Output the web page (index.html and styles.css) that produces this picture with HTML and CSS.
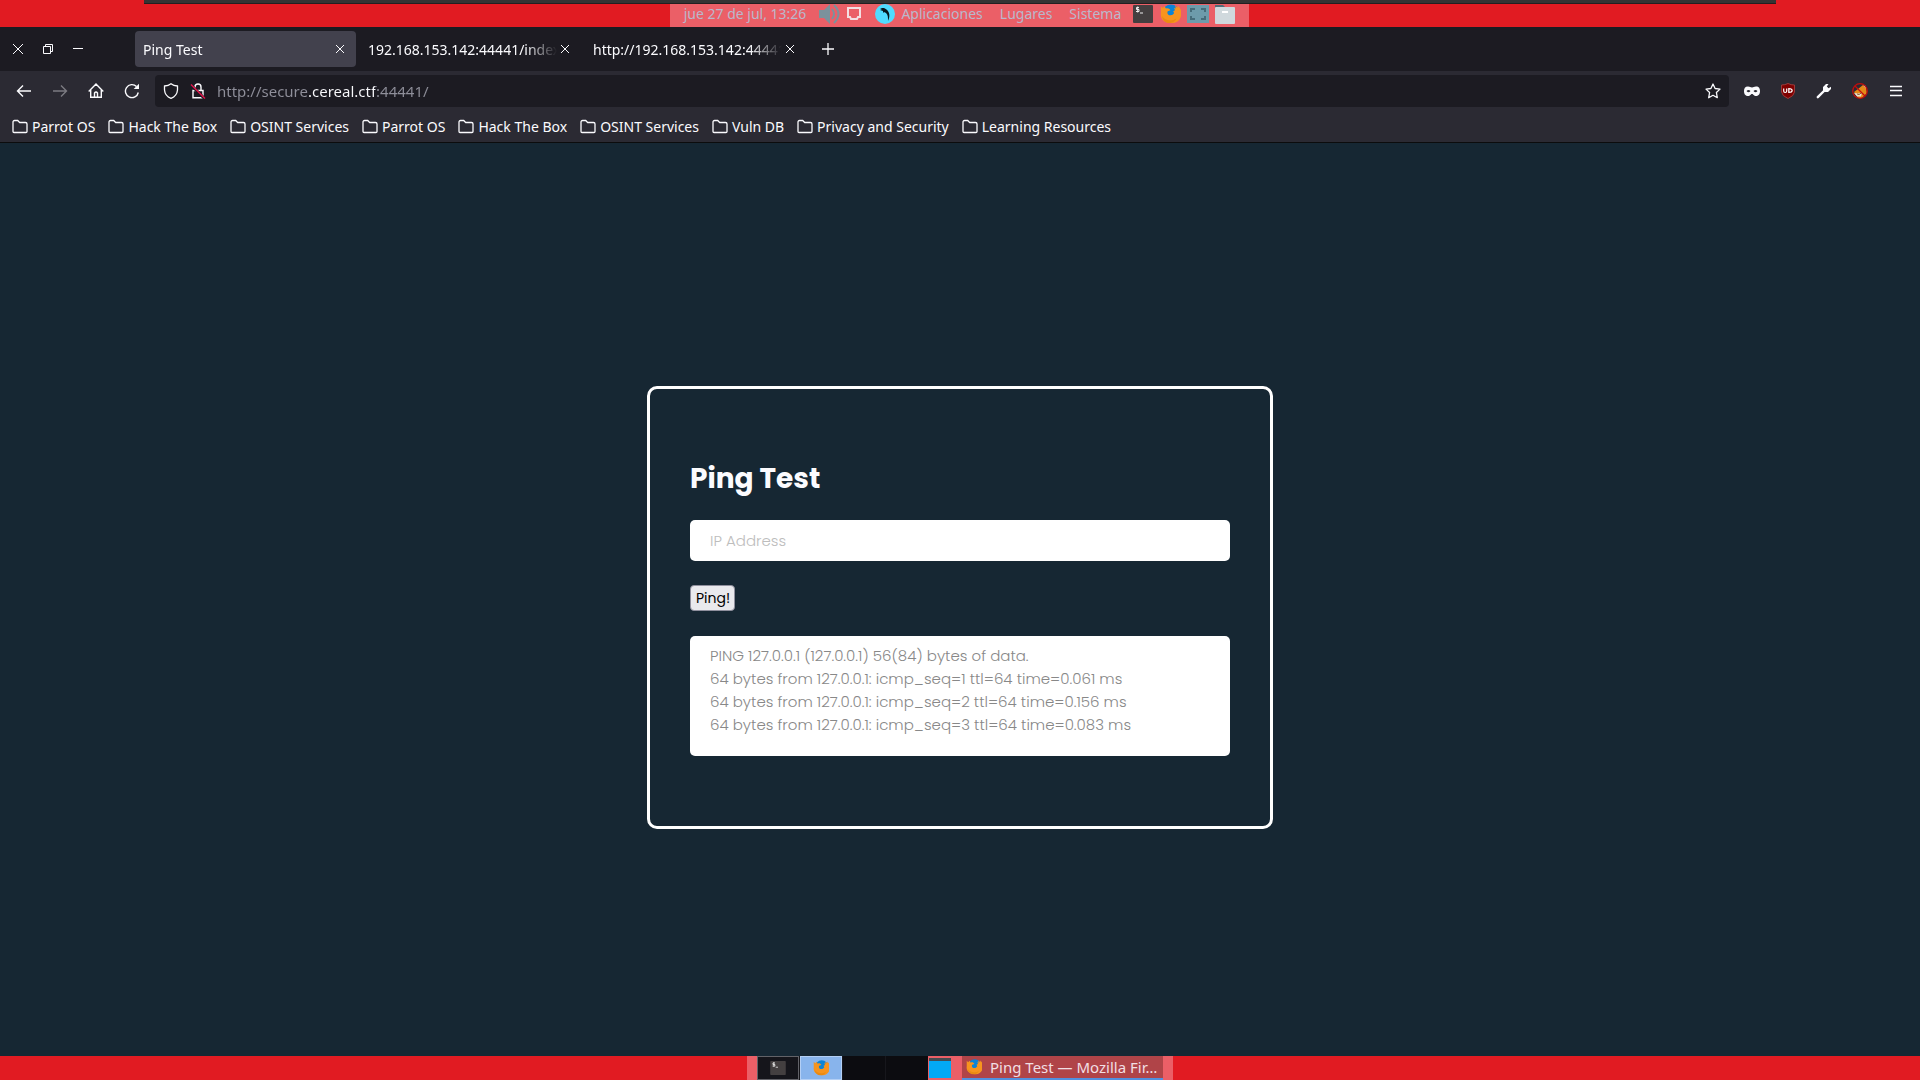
FILE: index.html
```html
<!DOCTYPE html>
<html lang="es">
<head>
<meta charset="utf-8">
<title>Ping Test</title>
<link rel="stylesheet" href="styles.css">
</head>
<body>
<svg class="sprites" aria-hidden="true">
  <symbol id="firefox" viewBox="0 0 22 22">
    <circle cx="12" cy="9.500" r="9" fill="#0a84d8"/>
    <path d="M1 2.500l2 2 2-2 1.500 2.500c2-1 4 0 5 2l-3 1c-1 2 0 4.500 3 4.500 2 0 3-1 4-2.500l-1-2 2-1-1-3 2 1-1-3 3 2V2c4 3 5 8 3 13-2 4-5 6-9 6C4 21 0 16 1 10z" fill="#f7941e"/>
    <path d="M2 13c3 5 10 7 16 3-2 4-5 5-8 5-4 0-7-3-8-8z" fill="#ea8a12"/>
  </symbol>
  <symbol id="folder" viewBox="0 0 16 16">
    <path d="M1 12.500v-9.500a1.500 1.500 0 0 1 1.500-1.500h3.200l2 2h5.800a1.500 1.500 0 0 1 1.500 1.500v7.500a1 1 0 0 1-1 1h-12a1 1 0 0 1-1-1z" fill="none" stroke="currentColor" stroke-width="1.300"/>
  </symbol>
  <symbol id="close" viewBox="0 0 16 16">
    <path d="M4 4l8 8M12 4l-8 8" stroke="currentColor"/>
  </symbol>
  <symbol id="terminal" viewBox="0 0 20 18">
    <rect width="20" height="18" rx="1" fill="#433f40"/>
    <path d="M6 2.500H3.500v2H6v2H3M4.700 1.500v6M7 8h3" stroke="#eee" fill="none"/>
  </symbol>
</svg>

<header class="panel panel-top">
  <div class="tray tray-top">
    <span class="clock">jue 27 de jul, 13:26</span>
    <svg class="speaker" width="22" height="20" viewBox="0 0 22 20"><path d="M0 6h5l6-6v20l-6-6H0z" fill="#7b929c"/><path d="M13 5q4 5 0 10M15 1q9 9 0 18" stroke="#7b929c" stroke-width="2" fill="none"/></svg>
    <svg class="monitor" width="14" height="13" viewBox="0 0 14 13"><path d="M1 1h12v9h-2l-1 2H4l-1-2H1z" fill="none" stroke="#f3dfe2" stroke-width="2"/></svg>
    <svg class="parrot" width="20" height="20" viewBox="0 0 20 20"><circle cx="10" cy="10" r="10" fill="#4fdcff"/><path d="M5 4h4c5 2 7 7 4 13 0-4 0-6-2-8L9 8l-1 1V7L5 6l2-1z" fill="#07191f"/></svg>
    <nav class="menus"><a href="#">Aplicaciones</a><a href="#">Lugares</a><a href="#">Sistema</a></nav>
    <div class="launchers">
      <svg width="20" height="18"><use href="#terminal"/></svg>
      <svg width="22" height="20"><use href="#firefox"/></svg>
      <svg width="22" height="18" viewBox="0 0 22 18"><rect width="22" height="18" fill="#6d9bab"/><path d="M4 7V4h4M14 4h4v3M4 11v3h4M14 14h4v-3" fill="none" stroke="#466c7a" stroke-width="2"/></svg>
      <svg width="20" height="20" viewBox="0 0 20 20"><path d="M0 5V1h8l2 2h9v4H0z" fill="#526b78"/><rect y="3" width="20" height="17" rx="1" fill="#d0d9dd"/><path d="M7 8h6" stroke="#fff" stroke-width="2"/></svg>
    </div>
  </div>
</header>

<div class="tabstrip">
  <div class="window-controls">
    <button type="button" aria-label="Cerrar"><svg width="12" height="12" viewBox="0 0 12 12"><path d="M1 1l10 10M11 1L1 11" stroke="currentColor"/></svg></button>
    <button type="button" aria-label="Restaurar"><svg width="12" height="12" viewBox="0 0 12 12"><path d="M1.500 3.500h7v7h-7zM3.500 3.500v-2h7v7h-2" fill="none" stroke="currentColor"/></svg></button>
    <button type="button" aria-label="Minimizar"><svg width="12" height="12" viewBox="0 0 12 12"><path d="M1 5.500h10" stroke="currentColor"/></svg></button>
  </div>
  <div class="tabs">
    <div class="tab tab-active"><span class="tab-title">Ping Test</span><button type="button" aria-label="Cerrar pestaña"><svg width="16" height="16"><use href="#close"/></svg></button></div>
    <div class="tab"><span class="tab-title">192.168.153.142:44441/index</span><button type="button" aria-label="Cerrar pestaña"><svg width="16" height="16"><use href="#close"/></svg></button></div>
    <div class="tab"><span class="tab-title">http://192.168.153.142:44441</span><button type="button" aria-label="Cerrar pestaña"><svg width="16" height="16"><use href="#close"/></svg></button></div>
  </div>
  <button type="button" class="new-tab" aria-label="Nueva pestaña"><svg width="14" height="14" viewBox="0 0 14 14"><path d="M7 1v12M1 7h12" stroke="currentColor" stroke-width="1.300"/></svg></button>
</div>

<div class="toolbar">
  <div class="tool-group">
    <button type="button" aria-label="Atrás"><svg width="16" height="16" viewBox="0 0 16 16"><path d="M15 8H1.500M7 2.500L1.500 8 7 13.500" fill="none" stroke="currentColor" stroke-width="1.400"/></svg></button>
    <button type="button" aria-label="Adelante" disabled><svg width="16" height="16" viewBox="0 0 16 16"><path d="M1 8h13.500M9 2.500L14.500 8 9 13.500" fill="none" stroke="currentColor" stroke-width="1.400"/></svg></button>
    <button type="button" aria-label="Inicio"><svg width="16" height="16" viewBox="0 0 16 16"><path d="M.7 8.500L8 1l7.300 7.500M2.700 7v7.300h10.600V7M6.500 14v-4q1.500-2 3 0v4" fill="none" stroke="currentColor" stroke-width="1.400"/></svg></button>
    <button type="button" aria-label="Recargar"><svg width="16" height="16" viewBox="0 0 16 16"><path d="M14.300 9.500A6.500 6.500 0 1 1 12.500 3.500" fill="none" stroke="currentColor" stroke-width="1.400"/><path d="M15 .7v5.300h-5.300z" fill="currentColor"/></svg></button>
  </div>
  <div class="urlbar">
    <svg width="16" height="16" viewBox="0 0 16 16"><path d="M8 .8q2.500 2 6.500 2.200v4Q14 13 8 15.300 2 13 1.500 7V3Q5.500 2.800 8 .8z" fill="none" stroke="currentColor" stroke-width="1.300"/></svg>
    <svg width="16" height="16" viewBox="0 0 16 16"><path d="M3 7.500h10v7.300H3zM5 7V4a3 3 0 0 1 6 0v3" fill="none" stroke="currentColor" stroke-width="1.400"/><path d="M1 2l14 14" stroke="#1c1b22" stroke-width="3"/><path d="M1 1.500L15 15.500" stroke="#e2154b" stroke-width="1.400"/></svg>
    <input class="address" type="text" aria-label="Dirección" value="http://secure.cereal.ctf:44441/">
    <button type="button" class="star" aria-label="Marcador"><svg width="16" height="16" viewBox="0 0 16 16"><path d="M8 1l2.100 4.500 4.900.6-3.600 3.400.9 5.200L8 12.300l-4.300 2.400.9-5.200L1 6.100l4.900-.6z" fill="none" stroke="currentColor" stroke-width="1.300" stroke-linejoin="round"/></svg></button>
  </div>
  <div class="tool-group">
    <button type="button" aria-label="Máscara"><svg width="16" height="16" viewBox="0 0 16 16"><path fill-rule="evenodd" d="M4 3.500c2 0 2.500 1 4 1s2-1 4-1c3 0 4 2 4 4.500s-1 5-4 5c-2.500 0-2.500-2-4-2s-1.500 2-4 2c-3 0-4-2.500-4-5s1-4.500 4-4.500zM2.500 8q2 2.500 4 0-2-2-4 0zM9.500 8q2 2.500 4 0-2-2-4 0z" fill="currentColor"/></svg></button>
    <button type="button" aria-label="uBlock Origin"><svg width="16" height="16" viewBox="0 0 16 16"><path d="M8 .5q3 1.500 6.500 1.500v7Q14 13 8 15.500 2 13 1.500 9V2Q5 2 8 .5z" fill="#800000" stroke="#9b3a3a"/><path d="M3.700 5.500v2.500q0 1.500 1.500 1.500t1.500-1.500v-2.500M8.800 5.600v3.800c4.500 0 4.500-3.800 0-3.800z" fill="none" stroke="#fff" stroke-width="1.200"/></svg></button>
    <button type="button" aria-label="Herramientas"><svg width="16" height="16" viewBox="0 0 16 16"><path d="M1.800 14.200L9 7" stroke="currentColor" stroke-width="2.400" stroke-linecap="round"/><path d="M7 7.500V4l3-3h2.500L10.800 3.500l1.700 1.700L15 3.700V6l-3 3H8.500z" fill="currentColor"/></svg></button>
    <button type="button" aria-label="FoxyProxy"><svg width="16" height="16" viewBox="0 0 16 16"><path d="M2 9l4-3 5-4 3 3 1 5-5 5H6z" fill="#e58a17"/><path d="M2 10l4 .5 4-1-1 4H5zM11 2l3 3.500V3z" fill="#e8dfd4"/><path d="M5 11l2 .5 3-2" stroke="#8a5a2a" fill="none"/><circle cx="8" cy="8" r="7.300" fill="none" stroke="#c40d0d" stroke-width="1.300"/><path d="M3 3l10 10" stroke="#c40d0d" stroke-width="1.300"/></svg></button>
    <button type="button" aria-label="Menú"><svg width="16" height="16" viewBox="0 0 16 16"><path d="M2 3.500h12M2 7.500h12M2 12.500h12" stroke="currentColor" stroke-width="1.300"/></svg></button>
  </div>
</div>

<nav class="bookmarks">
  <a href="#"><svg width="16" height="16"><use href="#folder"/></svg>Parrot OS</a>
  <a href="#"><svg width="16" height="16"><use href="#folder"/></svg>Hack The Box</a>
  <a href="#"><svg width="16" height="16"><use href="#folder"/></svg>OSINT Services</a>
  <a href="#"><svg width="16" height="16"><use href="#folder"/></svg>Parrot OS</a>
  <a href="#"><svg width="16" height="16"><use href="#folder"/></svg>Hack The Box</a>
  <a href="#"><svg width="16" height="16"><use href="#folder"/></svg>OSINT Services</a>
  <a href="#"><svg width="16" height="16"><use href="#folder"/></svg>Vuln DB</a>
  <a href="#"><svg width="16" height="16"><use href="#folder"/></svg>Privacy and Security</a>
  <a href="#"><svg width="16" height="16"><use href="#folder"/></svg>Learning Resources</a>
</nav>

<main class="page">
  <form class="card">
    <h1>Ping Test</h1>
    <input class="ip" type="text" aria-label="IP Address" placeholder="IP Address">
    <button type="button" class="ping">Ping!</button>
    <pre class="output">PING 127.0.0.1 (127.0.0.1) 56(84) bytes of data.
64 bytes from 127.0.0.1: icmp_seq=1 ttl=64 time=0.061 ms
64 bytes from 127.0.0.1: icmp_seq=2 ttl=64 time=0.156 ms
64 bytes from 127.0.0.1: icmp_seq=3 ttl=64 time=0.083 ms</pre>
  </form>
</main>

<footer class="panel panel-bottom">
  <div class="tray tray-bottom">
    <div class="workspaces">
      <button type="button" class="ws ws-terminal" aria-label="Espacio 1"><svg width="16" height="14"><use href="#terminal"/></svg></button>
      <button type="button" class="ws ws-current" aria-label="Espacio 2"><svg width="16" height="16"><use href="#firefox"/></svg></button>
      <button type="button" class="ws" aria-label="Espacio 3"></button>
      <button type="button" class="ws" aria-label="Espacio 4"></button>
    </div>
    <button type="button" class="desktop" aria-label="Escritorio"></button>
    <button type="button" class="task"><svg width="16" height="16"><use href="#firefox"/></svg><span>Ping Test — Mozilla Fir…</span></button>
  </div>
</footer>
</body>
</html>
```
FILE: styles.css
```css
* { box-sizing: border-box; }
body {
  margin: 0;
  min-height: 100vh;
  display: flex;
  flex-direction: column;
  font-family: "Noto Sans", sans-serif;
  font-size: 14px;
  line-height: 20px;
  color: #fbfbfe;
  background: #162733;
}
.sprites { display: none; }
svg { display: block; flex: none; }
a { color: inherit; text-decoration: none; }
button {
  font: inherit;
  color: inherit;
  padding: 0;
  border: 0;
  background: none;
}

.panel { display: flex; justify-content: center; background: #e11b22; }
.panel-top {
  position: relative;
  height: 27px;
  padding-top: 3px;
  padding-right: 1px;
}
.panel-top::before {
  content: "";
  position: absolute;
  top: 0;
  left: 144px;
  right: 144px;
  height: 3px;
  background: #343434;
  border-bottom: 1px solid #231f20;
}
.tray { display: flex; align-items: center; background: #eb5f67; }
.tray-top { padding: 0 14px 3px; color: #b9b8cb; }
.speaker { margin-left: 13px; }
.monitor { margin-left: 6px; }
.parrot { margin-left: 14px; }
.menus { display: flex; gap: 17px; margin: 0 12px 0 6px; }
.launchers { display: flex; align-items: center; gap: 6px; }

.tabstrip {
  display: flex;
  align-items: center;
  height: 44px;
  background: #1c1b22;
}
.window-controls { display: flex; gap: 18px; width: 135px; padding-left: 12px; }
.tabs { display: flex; gap: 4px; }
.tab {
  display: flex;
  align-items: center;
  width: 221px;
  height: 36px;
  padding: 0 8px;
  border-radius: 4px;
}
.tab-active { background: #42414d; }
.tab-title {
  flex: 1;
  padding-top: 2px;
  overflow: hidden;
  white-space: nowrap;
  mask-image: linear-gradient(to left, transparent, #000 32px);
}
.new-tab { margin-left: 15px; }

.toolbar {
  display: flex;
  align-items: center;
  gap: 15px;
  height: 40px;
  padding: 0 16px;
  background: #2b2a33;
}
.tool-group { display: flex; gap: 20px; }
.tool-group button:disabled { color: #7c7b82; }
.urlbar {
  flex: 1;
  display: flex;
  align-items: center;
  gap: 11px;
  height: 32px;
  padding: 0 8px;
  border-radius: 4px;
  background: #1c1b22;
}
.address {
  flex: 1;
  min-width: 0;
  height: 24px;
  padding: 0;
  border: 0;
  font: inherit;
  font-size: 15px;
  color: transparent;
  background: linear-gradient(to right, #8f8f9a 92px, #fbfbfe 92px 158px, #8f8f9a 158px);
  background-clip: text;
}

.bookmarks {
  display: flex;
  align-items: center;
  gap: 13px;
  height: 32px;
  padding: 1px 12px 0;
  background: #2b2a33;
  border-bottom: 1px solid #0c0c0d;
}
.bookmarks a { display: flex; align-items: center; gap: 4px; white-space: nowrap; }

.page {
  flex: 1;
  display: flex;
  align-items: center;
  justify-content: center;
  padding-top: 16px;
  font-family: Poppins, Inter, sans-serif;
  font-size: 15px;
}
.card {
  width: 626px;
  padding: 70px 40px;
  border: 3px solid #fff;
  border-radius: 10px;
}
.card h1 {
  margin: 0 0 22px;
  font-size: 28px;
  line-height: 39px;
  font-weight: 700;
}
.ip {
  display: block;
  width: 100%;
  height: 41px;
  padding: 0 20px;
  border: 0;
  border-radius: 5px;
  background: #fff;
  color: #777;
  font: inherit;
  font-weight: 300;
}
.ip::placeholder { color: #bdbdbd; opacity: 1; }
.ping {
  display: block;
  height: 26px;
  margin: 24px 0 25px;
  padding: 0 4px 0 5px;
  border: 1px solid #8f8f9d;
  border-radius: 4px;
  background: #e9e9ed;
  color: #000;
  font-size: 14px;
}
.output {
  height: 120px;
  margin: 0;
  padding: 8px 20px;
  border-radius: 5px;
  background: #fff;
  color: #888;
  font: inherit;
  font-weight: 300;
  line-height: 23px;
  overflow: hidden;
}

.tray-bottom { height: 24px; padding: 0 10px; }
.workspaces { display: flex; gap: 1px; background: #17171c; }
.ws {
  display: flex;
  align-items: center;
  justify-content: center;
  width: 42px;
  height: 24px;
  background: #0c0c10;
}
.ws-terminal { border: 1px solid #626268; background: #15151b; }
.ws-current { border: 1px solid #b3cff5; background: #88b4ec; }
.desktop {
  width: 22px;
  height: 20px;
  margin: 0 11px 0 1px;
  border-top: 3px solid #444c52;
  background: #03a9f4;
}
.task {
  display: flex;
  align-items: center;
  gap: 8px;
  width: 201px;
  height: 24px;
  padding: 0 8px 0 4px;
  border-bottom: 2px solid #5290df;
  background: #b04448;
  color: #f1dfe3;
  font-size: 15px;
}
.task span { white-space: nowrap; }
```
